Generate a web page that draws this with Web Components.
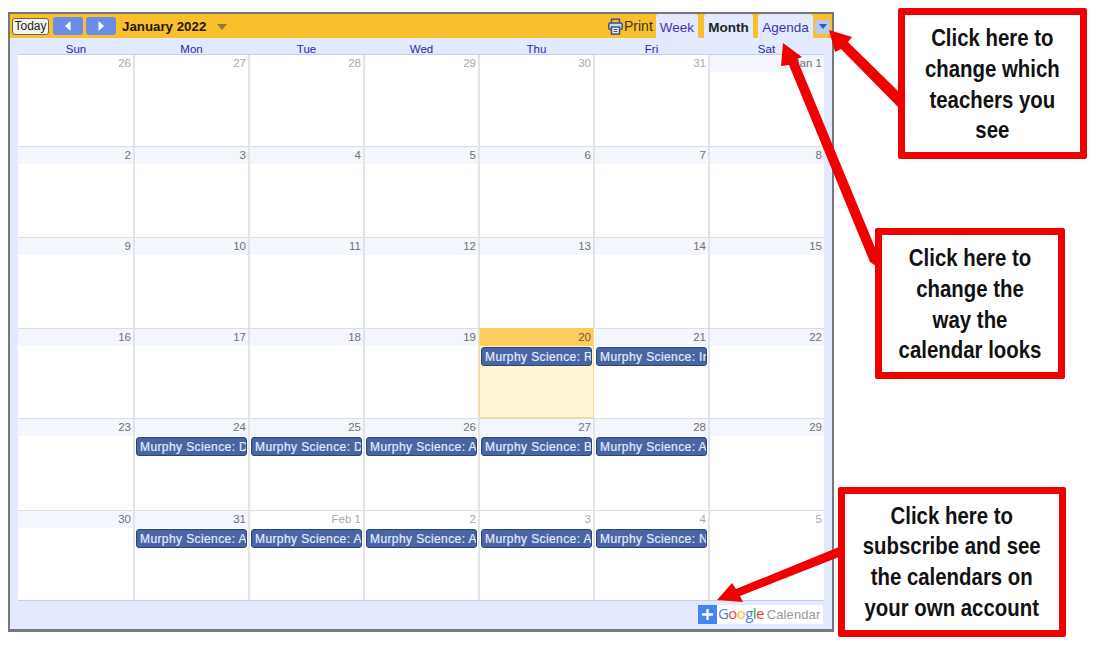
<!DOCTYPE html>
<html lang="en">
<head>
<meta charset="utf-8">
<title>Calendar</title>
<style>
  html, body { margin: 0; background: #fff; }
  body { width: 1096px; height: 648px; position: relative; overflow: hidden; font-family: "Liberation Sans", Arial, sans-serif; }
</style>
</head>
<body>
<cal-page>
  <cal-callout style="--x:898px;--y:8px;--w:189px;--h:151px;--pad:2px">Click here to<br>change which<br>teachers you<br>see</cal-callout>
  <cal-callout style="--x:875px;--y:228px;--w:190px;--h:151px;--pad:2px">Click here to<br>change the<br>way the<br>calendar looks</cal-callout>
  <cal-callout style="--x:838px;--y:487px;--w:228px;--h:150px;--pad:0px">Click here to<br>subscribe and see<br>the calendars on<br>your own account</cal-callout>
</cal-page>
<script>
class CalToolbar extends HTMLElement
{
  constructor()
  {
    super();
    this.attachShadow({mode: "open"});
    this.render();
  }

  render()
  {
    this.shadowRoot.innerHTML = `
      <style>${this.styleCSS()}</style>
      <button class="today">Today</button>
      <button class="nav"><svg width="8" height="10" viewBox="0 0 8 10"><path d="M6.5 0v10L1 5z" fill="#fff"/></svg></button>
      <button class="nav next"><svg width="8" height="10" viewBox="0 0 8 10"><path d="M1.5 0v10L7 5z" fill="#fff"/></svg></button>
      <span class="title">January 2022</span>
      <svg class="drop" width="10" height="6" viewBox="0 0 10 6"><path d="M0 0h10L5 6z" fill="#8f7a3c"/></svg>
      <span class="spacer"></span>
      <svg class="printer" width="15" height="17" viewBox="0 0 15 17" fill="none" stroke="#45507a" stroke-width="1.5">
        <path d="M3.5 5V1.2h8V5"/>
        <rect x="0.8" y="5" width="13.4" height="6.6" rx="1.5" fill="#cfd6ea"/>
        <rect x="3.5" y="9" width="8" height="7" fill="#eef1fb"/>
        <path d="M5.5 11.5h4M5.5 13.5h4" stroke-width="1"/>
      </svg>
      <span class="print">Print</span>
      <a class="tab week">Week</a>
      <a class="tab month">Month</a>
      <a class="tab agenda">Agenda</a>
      <button class="menu"><svg width="8" height="5" viewBox="0 0 8 5"><path d="M0 0h8L4 5z" fill="#2a5bc4"/></svg></button>
    `;
  }

  styleCSS()
  {
    return `
      :host {
        display: flex;
        align-items: center;
        height: 24px;
        background: #f9bf2c;
        font-family: "Liberation Sans", Arial, sans-serif;
      }

      button {
        display: flex;
        align-items: center;
        justify-content: center;
        padding: 0;
        margin: 0;
        font: inherit;
      }

      .today {
        width: 37px;
        height: 17px;
        margin-left: 2px;
        font-size: 12px;
        color: #222;
        background: #f4f3ee;
        border: 1px solid #6b6650;
        border-radius: 3px;
      }

      .nav {
        width: 30px;
        height: 18px;
        margin-left: 4px;
        background: #6a8ce8;
        border: 0;
        border-radius: 3px;
      }

      .next {
        margin-left: 3px;
      }

      .title {
        margin-left: 6px;
        font-size: 13.3px;
        font-weight: bold;
        color: #20180a;
      }

      .drop {
        margin-left: 11px;
        margin-top: 2px;
      }

      .spacer {
        flex: 1;
      }

      .printer {
        margin-right: 1px;
      }

      .print {
        font-size: 14px;
        color: #3c3520;
        width: 28px;
        margin-right: 4px;
        margin-top: -1px;
      }

      .tab {
        display: flex;
        align-items: center;
        justify-content: center;
        height: 24px;
        background: #e3e9ff;
        border-radius: 3px 3px 0 0;
        font-size: 13.5px;
        color: #3f35b4;
        padding-top: 2px;
        box-sizing: border-box;
      }

      .week {
        width: 42px;
        margin-right: 6px;
      }

      .month {
        width: 49px;
        margin-right: 5px;
        font-weight: bold;
        color: #222;
      }

      .agenda {
        width: 55px;
        margin-right: 2px;
      }

      .menu {
        width: 15px;
        height: 14px;
        margin-right: 2px;
        margin-top: 1px;
        background: #b8c8ee;
        border: 0;
        border-radius: 2px;
      }
    `;
  }
}

class CalEvent extends HTMLElement
{
  constructor()
  {
    super();
    this.attachShadow({mode: "open"});
    this.shadowRoot.innerHTML = `
      <style>
        :host {
          display: block;
          height: 19px;
          margin: 1px 1px 0 1px;
          box-sizing: border-box;
          padding: 0 0 0 3px;
          overflow: hidden;
          background: #4a65a4;
          border: 1px solid #2c4478;
          border-radius: 3px;
          font: 12px/18px "Liberation Sans", Arial, sans-serif;
          letter-spacing: 0.4px;
          -webkit-text-stroke: 0.2px #e4ecff;
          color: #e4ecff;
          white-space: nowrap;
        }
      </style>
      <slot></slot>
    `;
  }
}

class CalDay extends HTMLElement
{
  static get observedAttributes()
  {
    return ["data-label"];
  }

  constructor()
  {
    super();
    this.attachShadow({mode: "open"});
    this.shadowRoot.innerHTML = `
      <style>
        :host {
          display: block;
          min-width: 0;
          overflow: hidden;
          background: #fff;
          border-right: 2px solid #e2e3e6;
          border-top: 1px solid #dcdde2;
          box-sizing: border-box;
          font: 11.5px "Liberation Sans", Arial, sans-serif;
        }

        #label {
          height: 17px;
          line-height: 16px;
          padding-right: 2px;
          text-align: right;
          color: #707070;
          background: #f4f6fe;
        }

        :host([data-other]) #label {
          color: #a9a9a9;
          background: #fff;
        }

        :host([data-toprow]) {
          border-top: 0;
        }

        :host([data-today]) {
          background: #fff4d6;
          border-top: 1px solid #fbcd60;
          border-right: 1px solid #fbd985;
          border-bottom: 1px solid #fbd985;
          border-left: 1px solid #fbd985;
          margin-left: -1px;
          margin-right: 1px;
        }

        :host([data-today]) #label {
          background: #fbcd60;
          color: #6b5a24;
        }

        :host([data-last]) {
          border-right: 0;
        }
      </style>
      <div id="label"></div>
      <slot></slot>
    `;
  }

  attributeChangedCallback(name, oldValue, value)
  {
    this.shadowRoot.querySelector("#label").textContent = value;
  }
}

class CalGrid extends HTMLElement
{
  constructor()
  {
    super();
    this.attachShadow({mode: "open"});
    this.render();
  }

  days()
  {
    const events = {
      "20": "R", "21": "Ir",
      "24": "D", "25": "D", "26": "A", "27": "B", "28": "A",
      "31": "A", "Feb 1": "A", "f2": "A", "f3": "A", "f4": "N"
    };
    const list = [];
    for (const n of [26, 27, 28, 29, 30, 31])
    {
      list.push({label: n, other: true});
    }
    list.push({label: "Jan 1"});
    for (let n = 2; n <= 31; n++)
    {
      list.push({label: n, event: events[n], today: n === 20});
    }
    list.push({label: "Feb 1", other: true, event: events["Feb 1"]});
    for (const n of [2, 3, 4, 5])
    {
      list.push({label: n, other: true, event: events["f" + n]});
    }
    return list;
  }

  render()
  {
    const names = ["Sun", "Mon", "Tue", "Wed", "Thu", "Fri", "Sat"];
    const heads = names.map(name => `<span>${name}</span>`).join("");
    const cells = this.days().map((day, i) => `
      <cal-day data-label="${day.label}"
        ${day.other ? "data-other" : ""}
        ${day.today ? "data-today" : ""}
        ${i < 7 ? "data-toprow" : ""}
        ${i % 7 === 6 ? "data-last" : ""}>
        ${day.event ? `<cal-event>Murphy Science: ${day.event}</cal-event>` : ""}
      </cal-day>`).join("");
    this.shadowRoot.innerHTML = `
      <style>${this.styleCSS()}</style>
      <div class="heads">${heads}</div>
      <div class="cells">${cells}</div>
    `;
  }

  styleCSS()
  {
    return `
      :host {
        display: block;
        padding: 6px 8px 0 8px;
      }

      .heads, .cells {
        display: grid;
        width: 806px;
      }

      .heads {
        grid-template-columns: 116px repeat(6, 115px);
        height: 10px;
        font: 11.5px/10px "Liberation Sans", Arial, sans-serif;
        color: #2d27ab;
        text-align: center;
        border-bottom: 1px solid #c3cdef;
        box-sizing: content-box;
      }

      .cells {
        grid-template-columns: 117px repeat(5, 115px) 114px;
        grid-template-rows: 91px 91px 91px 90px 92px 90px;
        background: #fff;
        border-bottom: 1px solid #c3cdef;
      }
    `;
  }
}

class CalBadge extends HTMLElement
{
  constructor()
  {
    super();
    this.attachShadow({mode: "open"});
    this.shadowRoot.innerHTML = `
      <style>
        :host {
          display: flex;
          align-items: center;
          width: 125px;
          height: 19px;
          background: #fff;
          font: 13px "Liberation Sans", Arial, sans-serif;
          white-space: nowrap;
        }

        .plus {
          display: flex;
          align-items: center;
          justify-content: center;
          width: 19px;
          height: 19px;
          margin-right: 1px;
          background: #4285f4;
        }

        .google {
          font-family: "Open Sans", "Liberation Sans", sans-serif;
          font-size: 15px;
          line-height: 17px;
          margin-top: -2px;
          letter-spacing: -0.6px;
          margin-right: 3px;
        }

        .cal {
          color: #9a9a9a;
          letter-spacing: 0.1px;
        }
      </style>
      <span class="plus"><svg width="13" height="13" viewBox="0 0 13 13"><path d="M5.3 1h2.4v4.3H12v2.4H7.7V12H5.3V7.7H1V5.3h4.3z" fill="#fff"/></svg></span>
      <span class="google"><span style="color:#4285f4">G</span><span style="color:#ea4335">o</span><span style="color:#fbbc05">o</span><span style="color:#4285f4">g</span><span style="color:#34a853">l</span><span style="color:#ea4335">e</span></span>
      <span class="cal">Calendar</span>
    `;
  }
}

class CalFrame extends HTMLElement
{
  constructor()
  {
    super();
    this.attachShadow({mode: "open"});
    this.shadowRoot.innerHTML = `
      <style>
        :host {
          display: block;
          width: 826px;
          height: 620px;
          box-sizing: border-box;
          background: #e3e9ff;
          border: solid #77777a;
          border-width: 2px 2px 3px 2px;
        }

        .foot {
          display: flex;
          justify-content: flex-end;
          padding: 4px 9px 0 0;
        }
      </style>
      <cal-toolbar></cal-toolbar>
      <cal-grid></cal-grid>
      <div class="foot"><cal-badge></cal-badge></div>
    `;
  }
}

class CalCallout extends HTMLElement
{
  constructor()
  {
    super();
    this.attachShadow({mode: "open"});
    this.shadowRoot.innerHTML = `
      <style>
        :host {
          position: absolute;
          left: var(--x);
          top: var(--y);
          width: var(--w);
          height: var(--h);
          box-sizing: border-box;
          display: flex;
          align-items: center;
          justify-content: center;
          padding-top: var(--pad);
          background: #fff;
          border: 7px solid #f00000;
          border-radius: 2px;
          font: bold 24px/30.6px "Liberation Sans", Arial, sans-serif;
          color: #111;
          text-align: center;
        }

        div {
          flex: none;
          white-space: nowrap;
          transform: scaleX(0.85);
        }
      </style>
      <div><slot></slot></div>
    `;
  }
}

class CalPage extends HTMLElement
{
  constructor()
  {
    super();
    this.attachShadow({mode: "open"});
    this.shadowRoot.innerHTML = `
      <style>
        :host {
          display: block;
          width: 1096px;
          height: 648px;
          padding: 12px 0 0 8px;
          box-sizing: border-box;
        }

        svg {
          position: absolute;
          left: 0;
          top: 0;
        }
      </style>
      <cal-frame></cal-frame>
      <svg width="1096" height="648" viewBox="0 0 1096 648" fill="#f00000">
        <path d="M829 30 L852 37 L848 42 L899 92 L899 108 L841 49 L835 52 Z"/>
        <path d="M783 43 L802 57 L797 59 L876 250 L876 266 L870 262 L789 65 L781 66 Z"/>
        <path d="M717 600 L732 583 L736 589 L839 547 L839 557 L740 596 L743 602 Z"/>
      </svg>
      <slot></slot>
    `;
  }
}

customElements.define("cal-toolbar", CalToolbar);
customElements.define("cal-event", CalEvent);
customElements.define("cal-day", CalDay);
customElements.define("cal-grid", CalGrid);
customElements.define("cal-badge", CalBadge);
customElements.define("cal-frame", CalFrame);
customElements.define("cal-callout", CalCallout);
customElements.define("cal-page", CalPage);
</script>
</body>
</html>
